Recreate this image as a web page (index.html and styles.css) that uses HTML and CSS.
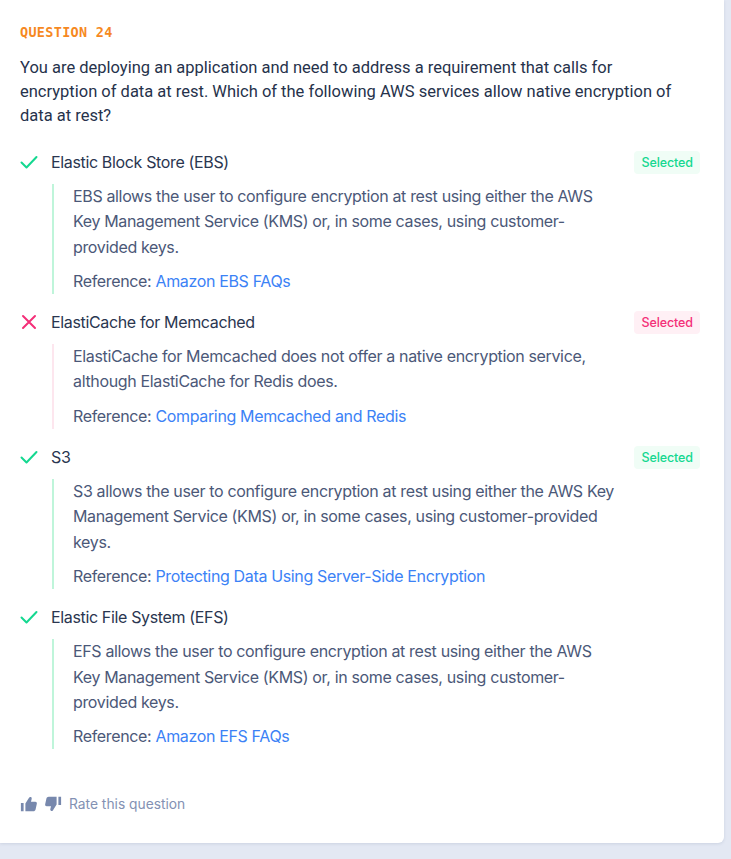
FILE: index.html
```html
<!DOCTYPE html>
<html>
<head>
<meta charset="utf-8">
<link rel="stylesheet" href="styles.css">
</head>
<body>
<div class="card">
  <div class="qlabel">QUESTION 24</div>
  <p class="qtext">You are deploying an application and need to address a requirement that calls for encryption of data at rest. Which of the following AWS services allow native encryption of data at rest?</p>

  <div class="option correct">
    <div class="opt-head">
      <svg class="mark" viewBox="0 0 20 20"><path d="M2.5 10.5 L7.5 15.5 L17.5 5" fill="none" stroke="currentColor" stroke-width="2" stroke-linecap="round" stroke-linejoin="round"/></svg>
      <span class="opt-title">Elastic Block Store (EBS)</span>
      <span class="badge">Selected</span>
    </div>
    <div class="opt-body">
      <p>EBS allows the user to configure encryption at rest using either the AWS Key Management Service (KMS) or, in some cases, using customer-provided keys.</p>
      <p class="ref">Reference: <a href="#">Amazon EBS FAQs</a></p>
    </div>
  </div>

  <div class="option wrong">
    <div class="opt-head">
      <svg class="mark" viewBox="0 0 20 20"><path d="M4 4 L16 16 M16 4 L4 16" fill="none" stroke="currentColor" stroke-width="2" stroke-linecap="round"/></svg>
      <span class="opt-title">ElastiCache for Memcached</span>
      <span class="badge">Selected</span>
    </div>
    <div class="opt-body">
      <p>ElastiCache for Memcached does not offer a native encryption service, although ElastiCache for Redis does.</p>
      <p class="ref">Reference: <a href="#">Comparing Memcached and Redis</a></p>
    </div>
  </div>

  <div class="option correct">
    <div class="opt-head">
      <svg class="mark" viewBox="0 0 20 20"><path d="M2.5 10.5 L7.5 15.5 L17.5 5" fill="none" stroke="currentColor" stroke-width="2" stroke-linecap="round" stroke-linejoin="round"/></svg>
      <span class="opt-title">S3</span>
      <span class="badge">Selected</span>
    </div>
    <div class="opt-body">
      <p>S3 allows the user to configure encryption at rest using either the AWS Key Management Service (KMS) or, in some cases, using customer-provided keys.</p>
      <p class="ref">Reference: <a href="#">Protecting Data Using Server-Side Encryption</a></p>
    </div>
  </div>

  <div class="option correct">
    <div class="opt-head">
      <svg class="mark" viewBox="0 0 20 20"><path d="M2.5 10.5 L7.5 15.5 L17.5 5" fill="none" stroke="currentColor" stroke-width="2" stroke-linecap="round" stroke-linejoin="round"/></svg>
      <span class="opt-title">Elastic File System (EFS)</span>
    </div>
    <div class="opt-body">
      <p>EFS allows the user to configure encryption at rest using either the AWS Key Management Service (KMS) or, in some cases, using customer-provided keys.</p>
      <p class="ref">Reference: <a href="#">Amazon EFS FAQs</a></p>
    </div>
  </div>

  <div class="rate">
    <svg class="thumb" viewBox="0 0 20 20"><path fill="currentColor" d="M1 9h3v9H1z M6 9.5 L9.5 4 C10 2.8 11 2 12 2.3 C13 2.6 13.2 3.6 12.9 4.7 L12.2 7.5 H17 C18.2 7.5 19 8.5 18.7 9.7 L17.3 16 C17 17.2 16 18 14.8 18 H6z"/></svg>
    <svg class="thumb" viewBox="0 0 20 20"><path fill="currentColor" d="M19 11h-3V2h3z M14 10.5 L10.5 16 C10 17.2 9 18 8 17.7 C7 17.4 6.8 16.4 7.1 15.3 L7.8 12.5 H3 C1.8 12.5 1 11.5 1.3 10.3 L2.7 4 C3 2.8 4 2 5.2 2 H14z"/></svg>
    <span>Rate this question</span>
  </div>
</div>
</body>
</html>
```
FILE: styles.css
```css
html, body {
  margin: 0;
  padding: 0;
  background: #e3e8f3;
}
body {
  font-family: Inter, "Noto Sans", sans-serif;
  width: 731px;
  height: 859px;
  overflow: hidden;
}
.card {
  width: 724px;
  box-sizing: border-box;
  background: #fff;
  border-bottom-right-radius: 6px;
  box-shadow: 0 1px 3px rgba(100, 116, 150, 0.18);
  padding: 22px 24px 30px 20px;
  height: 843px;
}
.qlabel {
  font-family: "DejaVu Sans Mono", monospace;
  font-weight: bold;
  font-size: 13.5px;
  color: #f6891f;
  letter-spacing: 0.3px;
  line-height: 20px;
}
.qtext {
  font-family: Roboto, sans-serif;
  font-size: 16.5px;
  line-height: 24px;
  color: #26324b;
  margin: 14px 0 22px;
  max-width: 672px;
}
.option {
  margin-bottom: 16px;
}
.opt-head {
  display: flex;
  align-items: center;
  height: 24px;
}
.mark {
  width: 20px;
  height: 20px;
  margin-left: -1px;
  margin-right: 12px;
}
.correct .mark { color: #14d890; }
.wrong .mark { color: #f42f78; }
.opt-title {
  font-size: 16px;
  letter-spacing: -0.35px;
  color: #2a3650;
  flex: 1;
}
.badge {
  font-size: 12.5px;
  font-weight: 500;
  letter-spacing: -0.1px;
  padding: 0 7px;
  height: 23px;
  line-height: 23px;
  border-radius: 4px;
}
.correct .badge { background: #f0fdf6; color: #14d890; }
.wrong .badge { background: #fff0f5; color: #f42f78; }
.opt-body {
  margin: 10px 0 0 32px;
  padding-left: 19px;
  border-left: 2px solid #bff5da;
  max-width: 548px;
}
.wrong .opt-body { border-left-color: #fde6ee; }
.opt-body p {
  margin: 0;
  font-size: 16px;
  letter-spacing: -0.35px;
  line-height: 25.3px;
  color: #4b5878;
}
.opt-body p.ref {
  margin-top: 9px;
}
.opt-body a {
  color: #3b82f6;
  text-decoration: none;
}
.rate {
  display: flex;
  align-items: center;
  margin-top: 46px;
  color: #7788ad;
  font-size: 13.8px;
}
.thumb {
  width: 18px;
  height: 18px;
  margin-right: 6px;
}
.rate span {
  margin-left: 1px;
  color: #8391b3;
}
```
